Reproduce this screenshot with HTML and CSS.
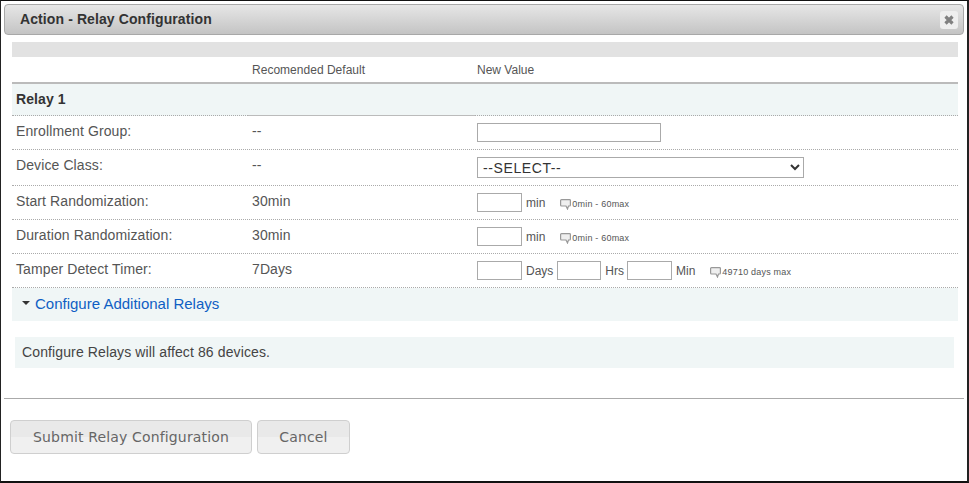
FILE: index.html
```html
<!DOCTYPE html>
<html lang="en">

<head>
    <meta charset="UTF-8">
    <title>Action - Relay Configuration</title>
    <link rel="stylesheet" href="styles.css">
</head>

<body>
    <div class="dialog">
        <div class="title-bar">
            <span class="title">Action - Relay Configuration</span>
            <button type="button" class="close-btn" aria-label="Close">
                <svg width="10" height="10" viewBox="0 0 10 10">
                    <path d="M1.5 1.5 L8.5 8.5 M8.5 1.5 L1.5 8.5" stroke="#808080" stroke-width="3.2" fill="none"/>
                </svg>
            </button>
        </div>

        <div class="content">
            <div class="grey-band"></div>

            <div class="row head-row">
                <div></div>
                <div>Recomended Default</div>
                <div class="value">New Value</div>
            </div>

            <div class="row relay-row">
                <div class="relay-name">Relay 1</div>
                <div class="relay-mid"></div>
                <div></div>
            </div>

            <div class="row h34">
                <div>Enrollment Group:</div>
                <div>--</div>
                <div class="value"><input type="text" class="input-wide"></div>
            </div>

            <div class="row h36">
                <div>Device Class:</div>
                <div>--</div>
                <div class="value">
                    <select class="input-select">
                        <option>--SELECT--</option>
                    </select>
                </div>
            </div>

            <div class="row h34">
                <div>Start Randomization:</div>
                <div>30min</div>
                <div class="value">
                    <input type="text" class="input-small">
                    <span class="unit">min</span>
                    <span class="hint">
                        <svg class="bubble" width="11" height="11" viewBox="0 0 11 11"><path d="M1.5 .7 H9.5 Q10.4 .7 10.4 1.5 V6 Q10.4 7 9.5 7 H8.5 L7.5 10 L6 7 H1.5 Q.6 7 .6 6 V1.5 Q.6 .7 1.5 .7 Z" fill="#efefef" stroke="#999" stroke-width="1.2"/></svg>0min - 60max
                    </span>
                </div>
            </div>

            <div class="row h34">
                <div>Duration Randomization:</div>
                <div>30min</div>
                <div class="value">
                    <input type="text" class="input-small">
                    <span class="unit">min</span>
                    <span class="hint">
                        <svg class="bubble" width="11" height="11" viewBox="0 0 11 11"><path d="M1.5 .7 H9.5 Q10.4 .7 10.4 1.5 V6 Q10.4 7 9.5 7 H8.5 L7.5 10 L6 7 H1.5 Q.6 7 .6 6 V1.5 Q.6 .7 1.5 .7 Z" fill="#efefef" stroke="#999" stroke-width="1.2"/></svg>0min - 60max
                    </span>
                </div>
            </div>

            <div class="row h34">
                <div>Tamper Detect Timer:</div>
                <div>7Days</div>
                <div class="value">
                    <input type="text" class="input-small">
                    <span class="unit unit-days">Days</span>
                    <input type="text" class="input-small input-hrs">
                    <span class="unit unit-hrs">Hrs</span>
                    <input type="text" class="input-small">
                    <span class="unit">Min</span>
                    <span class="hint">
                        <svg class="bubble" width="11" height="11" viewBox="0 0 11 11"><path d="M1.5 .7 H9.5 Q10.4 .7 10.4 1.5 V6 Q10.4 7 9.5 7 H8.5 L7.5 10 L6 7 H1.5 Q.6 7 .6 6 V1.5 Q.6 .7 1.5 .7 Z" fill="#efefef" stroke="#999" stroke-width="1.2"/></svg>49710 days max
                    </span>
                </div>
            </div>

            <div class="additional">
                <span class="caret"></span>
                <a href="#" class="additional-link">Configure Additional Relays</a>
            </div>

            <div class="notice">Configure Relays will affect 86 devices.</div>
        </div>

        <hr class="divider">

        <div class="actions">
            <button type="button" class="btn btn-submit">Submit Relay Configuration</button>
            <button type="button" class="btn btn-cancel">Cancel</button>
        </div>
    </div>
</body>

</html>
```

FILE: styles.css
```css
* {
    box-sizing: border-box;
}

html,
body {
    margin: 0;
    padding: 0;
}

body {
    width: 969px;
    height: 483px;
    overflow: hidden;
    background: #fff;
    font-family: "Liberation Sans", Arial, sans-serif;
    font-size: 14px;
    color: #4a4a4a;
}

.dialog {
    height: 483px;
    padding: 3px 3px 0 3px;
    border-top: 1px solid #111;
    border-left: 1px solid #222;
    border-right: 2px solid #222;
    border-bottom: 2px solid #111;
}

.title-bar {
    height: 31px;
    display: flex;
    align-items: center;
    justify-content: space-between;
    padding: 0 5px 0 15px;
    border: 1px solid #a8a8a8;
    border-radius: 4px;
    background: linear-gradient(#e6e6e6, #c4c4c4);
}

.title {
    padding-bottom: 1px;
    font-size: 14px;
    font-weight: bold;
    color: #333;
    letter-spacing: 0.1px;
}

.close-btn {
    width: 18px;
    height: 18px;
    padding: 0;
    display: flex;
    align-items: center;
    justify-content: center;
    border: none;
    border-radius: 3px;
    background: #eeeeee;
}

.content {
    padding: 7px 6px 0 8px;
}

.grey-band {
    height: 15px;
    background: #e2e2e2;
}

.row {
    display: grid;
    grid-template-columns: 236px 227px 1fr;
    align-items: center;
    border-bottom: 1px dotted #aaa;
    color: #555;
    letter-spacing: 0.1px;
}

.row > div {
    padding-bottom: 3px;
}

.row > div:first-child {
    padding-left: 4px;
}

.row > div:nth-child(2) {
    padding-left: 4px;
}

.row > .value {
    padding-bottom: 0;
    padding-left: 2px;
}

.h34 {
    height: 34px;
}

.h36 {
    height: 36px;
}

.h36 > div {
    padding-bottom: 5px;
}

.head-row {
    height: 27px;
    font-size: 12px;
    border-bottom: 2px solid #bbb;
    letter-spacing: 0.02px;
}

.head-row > div {
    padding-bottom: 0;
}

.relay-row {
    height: 32px;
    align-items: stretch;
    background: #f0f6f6;
}

.relay-row > div {
    display: flex;
    align-items: center;
    padding-bottom: 1px;
}

.relay-name {
    font-weight: bold;
    color: #333;
}

.relay-mid {
    margin-bottom: -1px;
    border-bottom: 1px solid #bbb;
}

.value {
    display: flex;
    align-items: center;
    font-size: 12px;
    letter-spacing: 0;
}

input,
select {
    margin: 0;
    border: 1px solid #aaa;
    border-radius: 0;
    background: #fff;
}

.input-wide {
    width: 184px;
    height: 19px;
}

.input-select {
    width: 327px;
    height: 21px;
    padding-left: 1px;
    font-family: "Liberation Sans", Arial, sans-serif;
    font-size: 14px;
    letter-spacing: 0.6px;
    color: #333;
}

.input-small {
    width: 45px;
    height: 19px;
}

.input-hrs {
    width: 44px;
}

.unit {
    margin-left: 4px;
    padding-top: 1px;
}

.unit-days {
    margin-right: 4px;
}

.unit-hrs {
    margin-right: 3px;
}

.hint {
    display: inline-flex;
    align-items: center;
    margin-left: 15px;
    padding-top: 3px;
    font-size: 9px;
    letter-spacing: 0.2px;
    color: #555;
}

.bubble {
    margin-right: 1px;
}

.additional {
    height: 33px;
    display: flex;
    align-items: center;
    padding-left: 10px;
    padding-bottom: 3px;
    background: #f0f6f6;
}

.caret {
    width: 0;
    height: 0;
    margin-right: 5px;
    border-top: 4px solid #333;
    border-left: 4px solid transparent;
    border-right: 4px solid transparent;
}

.additional-link {
    font-size: 15px;
    color: #0f5fc4;
    text-decoration: none;
}

.notice {
    height: 31px;
    margin: 16px 4px 0 3px;
    padding-left: 7px;
    line-height: 31px;
    font-size: 14px;
    color: #444;
    background: #f0f6f6;
    letter-spacing: 0.12px;
}

.divider {
    height: 1px;
    margin: 30px 0 0 0;
    border: none;
    background: #aaa;
}

.actions {
    display: flex;
    gap: 5px;
    padding: 21px 0 0 6px;
}

.btn {
    height: 34px;
    padding: 0;
    border: 1px solid #cfcfcf;
    border-radius: 4px;
    background: linear-gradient(#e9e9e9 50%, #f0f0f0 50%);
    font-family: "DejaVu Sans", sans-serif;
    font-size: 14px;
    letter-spacing: 0.15px;
    color: #666;
}

.btn-submit {
    width: 242px;
}

.btn-cancel {
    width: 93px;
}
```
